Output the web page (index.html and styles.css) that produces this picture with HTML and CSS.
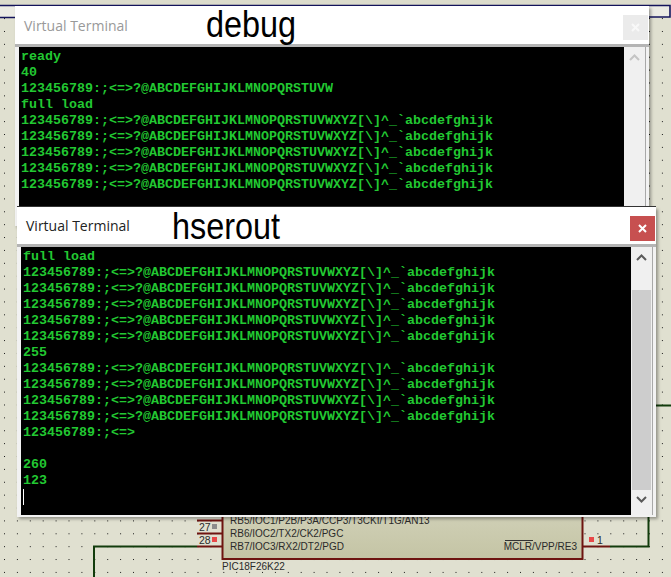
FILE: index.html
```html
<!DOCTYPE html>
<html lang="en">
<head>
<meta charset="utf-8">
<title>Virtual Terminal</title>
<link rel="stylesheet" href="styles.css">
</head>
<body>
<div class="desktop">
  <svg class="schematic" width="671" height="577" viewBox="0 0 671 577" xmlns="http://www.w3.org/2000/svg">
    <defs>
      <pattern id="grid" x="4" y="5.2" width="12.9" height="12.88" patternUnits="userSpaceOnUse">
        <rect width="1" height="1" fill="#1a1a1a"/>
      </pattern>
      <linearGradient id="chip" x1="0" y1="0" x2="0" y2="1">
        <stop offset="0" stop-color="#d2d2ba"/>
        <stop offset="1" stop-color="#c4c4a4"/>
      </linearGradient>
    </defs>
    <rect width="671" height="577" fill="#e0e0d0"/>
    <rect width="671" height="577" fill="url(#grid)"/>
    <rect width="671" height="5" fill="#dcdccc"/>
    <rect y="6" width="671" height="11" fill="#ececE4"/>
    <path class="navy" d="M0 5.5H670V17H649M0 17.5H15"/>
    <path class="wire" d="M94 577V546.500H197M610 546.500H648.500V515M656 405.500H671"/>
    <path class="pin" d="M197 520.500H222M197 533.500H222M197 546.500H222M583 546.500H610"/>
    <rect class="chip" x="222.500" y="505" width="360" height="54"/>
    <rect class="pad-grey" x="212" y="524" width="5" height="5"/>
    <rect class="pad-red" x="212" y="537" width="5" height="5"/>
    <rect class="pad-red" x="589" y="537" width="5" height="5"/>
    <text class="num" x="199" y="531">27</text>
    <text class="num" x="199" y="544">28</text>
    <text class="num" x="597" y="544">1</text>
    <text class="label" x="230" y="524">RB5/IOC1/P2B/P3A/CCP3/T3CKI/T1G/AN13</text>
    <text class="label" x="230" y="537">RB6/IOC2/TX2/CK2/PGC</text>
    <text class="label" x="230" y="550">RB7/IOC3/RX2/DT2/PGD</text>
    <text class="label end" x="577" y="550">MCLR/VPP/RE3</text>
    <path class="over" d="M505 540.500H533"/>
    <text class="label" x="222" y="570">PIC18F26K22</text>
  </svg>

  <section class="window window-back">
    <header class="titlebar">
      <span class="title">Virtual Terminal</span>
      <button class="close" type="button">
        <svg width="9" height="9" viewBox="0 0 9 9"><path d="M1 1L8 8M8 1L1 8"/></svg>
      </button>
    </header>
    <div class="content">
      <pre class="terminal">ready
40
123456789:;&lt;=&gt;?@ABCDEFGHIJKLMNOPQRSTUVW
full load
123456789:;&lt;=&gt;?@ABCDEFGHIJKLMNOPQRSTUVWXYZ[\]^_`abcdefghijk
123456789:;&lt;=&gt;?@ABCDEFGHIJKLMNOPQRSTUVWXYZ[\]^_`abcdefghijk
123456789:;&lt;=&gt;?@ABCDEFGHIJKLMNOPQRSTUVWXYZ[\]^_`abcdefghijk
123456789:;&lt;=&gt;?@ABCDEFGHIJKLMNOPQRSTUVWXYZ[\]^_`abcdefghijk
123456789:;&lt;=&gt;?@ABCDEFGHIJKLMNOPQRSTUVWXYZ[\]^_`abcdefghijk</pre>
      <div class="scrollbar">
        <svg class="chevron" width="11" height="7" viewBox="0 0 11 7"><path d="M1 6L5.500 1.500L10 6"/></svg>
      </div>
    </div>
    <span class="note note-debug">debug</span>
  </section>

  <section class="window window-front">
    <header class="titlebar">
      <span class="title">Virtual Terminal</span>
      <button class="close" type="button">
        <svg width="9" height="9" viewBox="0 0 9 9"><path d="M1 1L8 8M8 1L1 8"/></svg>
      </button>
    </header>
    <div class="content">
      <pre class="terminal">full load
123456789:;&lt;=&gt;?@ABCDEFGHIJKLMNOPQRSTUVWXYZ[\]^_`abcdefghijk
123456789:;&lt;=&gt;?@ABCDEFGHIJKLMNOPQRSTUVWXYZ[\]^_`abcdefghijk
123456789:;&lt;=&gt;?@ABCDEFGHIJKLMNOPQRSTUVWXYZ[\]^_`abcdefghijk
123456789:;&lt;=&gt;?@ABCDEFGHIJKLMNOPQRSTUVWXYZ[\]^_`abcdefghijk
123456789:;&lt;=&gt;?@ABCDEFGHIJKLMNOPQRSTUVWXYZ[\]^_`abcdefghijk
255
123456789:;&lt;=&gt;?@ABCDEFGHIJKLMNOPQRSTUVWXYZ[\]^_`abcdefghijk
123456789:;&lt;=&gt;?@ABCDEFGHIJKLMNOPQRSTUVWXYZ[\]^_`abcdefghijk
123456789:;&lt;=&gt;?@ABCDEFGHIJKLMNOPQRSTUVWXYZ[\]^_`abcdefghijk
123456789:;&lt;=&gt;?@ABCDEFGHIJKLMNOPQRSTUVWXYZ[\]^_`abcdefghijk
123456789:;&lt;=&gt;

260
123
<span class="caret"></span></pre>
      <div class="scrollbar">
        <svg class="chevron" width="11" height="7" viewBox="0 0 11 7"><path d="M1 6L5.500 1.500L10 6"/></svg>
        <div class="thumb"></div>
        <svg class="chevron" width="11" height="7" viewBox="0 0 11 7"><path d="M1 1L5.500 5.500L10 1"/></svg>
      </div>
    </div>
    <span class="note note-hserout">hserout</span>
  </section>
</div>
</body>
</html>
```

FILE: styles.css
```css
* { box-sizing: border-box; }

html, body {
  margin: 0;
  padding: 0;
  background: #e0e0d0;
}

.desktop {
  position: relative;
  width: 671px;
  height: 577px;
  overflow: hidden;
}

.schematic {
  position: absolute;
  left: 0;
  top: 0;
  display: block;
}

.navy { fill: none; stroke: #14145c; stroke-width: 1.6; }
.wire { fill: none; stroke: #123c0c; stroke-width: 2; }
.pin { fill: none; stroke: #6e1410; stroke-width: 2; }
.chip { fill: url(#chip); stroke: #6e1410; stroke-width: 2; }
.pad-grey { fill: #8c8c8c; }
.pad-red { fill: #e84848; }
.over { fill: none; stroke: #333; stroke-width: 1; }

.label {
  font-family: "Liberation Sans", Arial, sans-serif;
  font-size: 10px;
  fill: #2a2a2a;
}

.num {
  font-family: "Liberation Sans", Arial, sans-serif;
  font-size: 10.5px;
  fill: #2a2a2a;
}

.end { text-anchor: end; }

.window {
  position: absolute;
  display: flex;
  flex-direction: column;
  background: #fff;
  box-shadow: 2px 2px 3px rgba(0, 0, 0, 0.35);
}

.window-back {
  left: 15px;
  top: 6px;
  width: 634px;
  height: 220px;
}

.window-front {
  left: 17px;
  top: 207px;
  width: 639px;
  height: 310px;
  box-shadow: 0 -1px 0 #333, 2px 2px 3px rgba(0, 0, 0, 0.35);
}

.titlebar {
  display: flex;
  align-items: flex-start;
  justify-content: space-between;
  height: 37px;
  padding: 9px 1px 0 9px;
  background: #fff;
}

.window-back .titlebar { height: 38px; }
.window-back .title { margin-top: 1px; color: #999; }
.window-back .close { margin-top: 0; }

.title {
  font-family: "Open Sans", "Noto Sans", sans-serif;
  font-size: 14px;
  line-height: 20px;
  color: #222;
}

.close {
  display: flex;
  align-items: center;
  justify-content: center;
  width: 25px;
  height: 25px;
  padding: 0;
  border: 0;
  background: #c75050;
}

.close path { fill: none; stroke: #fff; stroke-width: 2; }

.window-back .close { background: #ebebeb; }
.window-back .close path { stroke: #f8f8f8; }

.content {
  display: flex;
  flex: 1;
  min-height: 0;
  padding: 0 3px 2px 4px;
  background: #f2f2f2;
  border-top: 3px solid #b4b4b4;
}

.terminal {
  flex: 1;
  margin: 0;
  padding: 1px 0 0 2px;
  overflow: hidden;
  background: #000;
  color: #22c832;
  font-family: "Liberation Mono", "Courier New", monospace;
  font-size: 13.33px;
  font-weight: 700;
  line-height: 16px;
}

.window-back .terminal,
.window-front .terminal { padding-top: 2px; }

.caret {
  display: inline-block;
  width: 1px;
  height: 16px;
  vertical-align: top;
  background: #fff;
}

.scrollbar {
  display: flex;
  flex-direction: column;
  align-items: center;
  flex: none;
  width: 22px;
  padding: 7px 1px 0;
  background: #f0f0f0;
  border-right: 1px solid #a8a8a8;
}

.chevron { flex: none; }
.chevron path { fill: none; stroke: #5a5a5a; stroke-width: 2; }
.window-back .chevron path { stroke: #c4c4c4; }

.thumb {
  align-self: stretch;
  flex: none;
  height: 200px;
  margin: 29px 0 6px;
  background: #cdcdcd;
}

.note {
  position: absolute;
  top: -1px;
  font-family: "Liberation Sans", Arial, sans-serif;
  font-size: 36px;
  line-height: 40px;
  color: #000;
  transform: scaleX(0.9);
  transform-origin: left center;
}

.note-debug { left: 191px; }
.note-hserout { left: 155px; top: 0; }
```
